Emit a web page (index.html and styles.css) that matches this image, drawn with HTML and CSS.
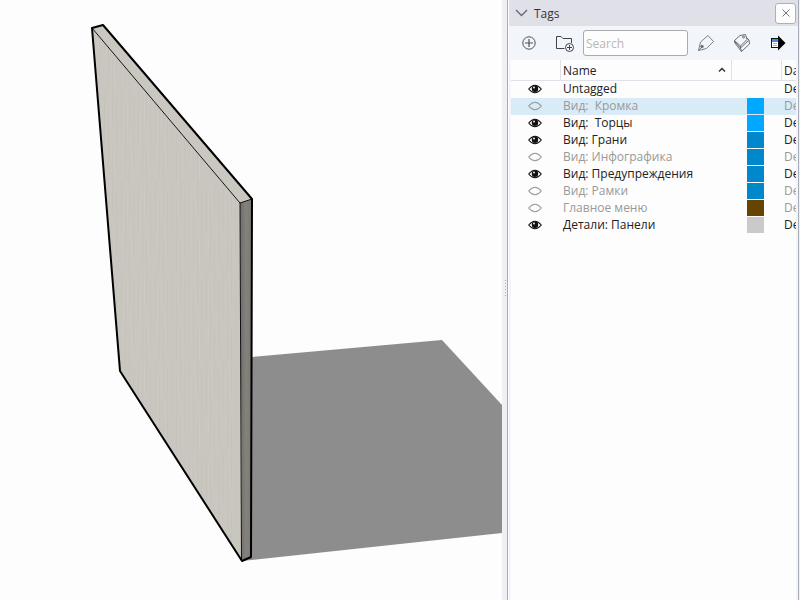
FILE: index.html
```html
<!DOCTYPE html>
<html lang="ru">
<head>
<meta charset="utf-8">
<title>Tags</title>
<link rel="stylesheet" href="styles.css">
</head>
<body>
<div class="app">
  <main class="viewport">
    <svg class="scene" width="502" height="600" viewBox="0 0 502 600" aria-hidden="true">
      <defs>
        <pattern id="grain" width="17" height="90" patternUnits="userSpaceOnUse">
          <rect width="17" height="90" fill="#c9c6bf"/>
          <path d="M2.500 0v52M6.500 20v70M10.500 0v34M10.500 60v30M14.500 10v66" stroke="#c6c3bc"/>
          <path d="M4.500 12v60M8.500 0v40M12.500 40v50" stroke="#cbc8c2"/>
        </pattern>
        <linearGradient id="edge"><stop offset="0" stop-color="#6d6d6a"/><stop offset=".5" stop-color="#84827c"/><stop offset="1" stop-color="#7a7873"/></linearGradient>
      </defs>
      <path d="M252 357L442 340L502 405V533L242 561Z" fill="#8d8d8d"/>
      <path d="M92 28L240 203L242 561L120 371Z" fill="url(#grain)"/>
      <path d="M92 28L103 25L252 199L240 203Z" fill="#cac7c1"/>
      <path d="M240 203L252 199L251 557L242 561Z" fill="url(#edge)"/>
      <path d="M92 28L240 203L241.500 560M240 203L252 199" fill="none" stroke="#111" stroke-width="1"/>
      <path d="M92 28L103 25L252 199L251 557L242 561L120 371Z" fill="none" stroke="#000" stroke-width="2" stroke-linejoin="round"/>
    </svg>
  </main>
  <div class="splitter"><span class="grip"></span></div>
  <aside class="panel">
    <header class="panel-head">
      <button class="collapse" aria-label="Collapse"><svg width="13" height="8" viewBox="0 0 13 8"><path d="M1 1l5.500 5.500L12 1" fill="none" stroke="#666670" stroke-width="1.300"/></svg></button>
      <h1 class="title">Tags</h1>
      <button class="close" aria-label="Close"><svg width="8" height="8" viewBox="0 0 8 8"><path d="M.5.5l7 7M7.500.5l-7 7" stroke="#777" fill="none"/></svg></button>
    </header>
    <div class="toolbar">
      <button class="tool" aria-label="Add tag"><svg width="20" height="20" viewBox="0 0 20 20" fill="none" stroke="#50505c"><circle cx="10" cy="10" r="6.200"/><path d="M6 10h8M10 6v8" stroke-width="1.200"/></svg></button>
      <button class="tool" aria-label="Add tag folder"><svg width="20" height="20" viewBox="0 0 20 20" fill="none" stroke="#41414f"><path d="M9.500 15.500h-8v-12H6l2 2h8.500V10"/><circle cx="14.500" cy="14.500" r="4"/><path d="M12 14.500h5M14.500 12v5"/></svg></button>
      <input class="search" type="text" placeholder="Search" aria-label="Search">
      <button class="tool" aria-label="Tag tool"><svg width="20" height="20" viewBox="0 0 20 20" fill="none" stroke="#73737d"><path d="M2.500 17.500l2-8.500 7.500-6.500 5.500 6-7 7-8 2zM2.500 17.500l4-4" stroke-width=".9"/><circle cx="6" cy="13.500" r="1.300" fill="#666"/></svg></button>
      <button class="tool" aria-label="Color by tag"><svg width="20" height="20" viewBox="0 0 20 20" fill="none" stroke="#5c5c69" stroke-width=".9"><path d="M8 2.500l5.500-1 1.500 5-6.500 6.500-6-5.500zM2.500 7.500v2l7 9 8-7.500-.5-4-2.500-2.500M3 9l5.500 6 8-7.500M8.500 13v2l1 3.500"/><circle cx="11.500" cy="4" r="1"/></svg></button>
      <button class="tool" aria-label="Details"><svg width="20" height="20" viewBox="0 0 20 20"><path d="M10 2.500l7.500 7.500-7.500 7.500z" fill="#000"/><rect x="3.500" y="5.500" width="7" height="9" fill="#fff" stroke="#111"/><path d="M4 6h6v3H4z" fill="#4389dc"/><path d="M5 10.500h4M5 12.500h4" stroke="#aaa"/></svg></button>
    </div>
    <div class="list">
      <table class="tags">
        <colgroup><col class="c-eye"><col class="c-name"><col class="c-color"><col></colgroup>
        <thead><tr><th></th><th><span class="sort">Name<svg width="8" height="6" viewBox="0 0 8 6"><path d="M1 4.500L4 1.500l3 3" fill="none" stroke="#333" stroke-width="1.500"/></svg></span></th><th></th><th>Dashes</th></tr></thead>
        <tbody>
          <tr><td><button class="eye" aria-label="Visible"><svg><use href="#open"/></svg></button></td><td>Untagged</td><td></td><td>Default</td></tr>
          <tr class="off selected"><td><button class="eye" aria-label="Hidden"><svg><use href="#shut"/></svg></button></td><td>Вид:  Кромка</td><td><button class="swatch sky" aria-label="Color"></button></td><td>Default</td></tr>
          <tr><td><button class="eye" aria-label="Visible"><svg><use href="#open"/></svg></button></td><td>Вид:  Торцы</td><td><button class="swatch sky" aria-label="Color"></button></td><td>Default</td></tr>
          <tr><td><button class="eye" aria-label="Visible"><svg><use href="#open"/></svg></button></td><td>Вид: Грани</td><td><button class="swatch blue" aria-label="Color"></button></td><td>Default</td></tr>
          <tr class="off"><td><button class="eye" aria-label="Hidden"><svg><use href="#shut"/></svg></button></td><td>Вид: Инфографика</td><td><button class="swatch blue" aria-label="Color"></button></td><td>Default</td></tr>
          <tr><td><button class="eye" aria-label="Visible"><svg><use href="#open"/></svg></button></td><td>Вид: Предупреждения</td><td><button class="swatch blue" aria-label="Color"></button></td><td>Default</td></tr>
          <tr class="off"><td><button class="eye" aria-label="Hidden"><svg><use href="#shut"/></svg></button></td><td>Вид: Рамки</td><td><button class="swatch blue" aria-label="Color"></button></td><td>Default</td></tr>
          <tr class="off"><td><button class="eye" aria-label="Hidden"><svg><use href="#shut"/></svg></button></td><td>Главное меню</td><td><button class="swatch brown" aria-label="Color"></button></td><td>Default</td></tr>
          <tr><td><button class="eye" aria-label="Visible"><svg><use href="#open"/></svg></button></td><td>Детали: Панели</td><td><button class="swatch gray" aria-label="Color"></button></td><td>Default</td></tr>
        </tbody>
      </table>
    </div>
  </aside>
  <div class="rim"></div>
</div>
<svg class="symbols" aria-hidden="true">
  <symbol id="open" viewBox="0 0 14 10"><path d="M.7 5Q7-2.500 13.300 5Q7 12.500.7 5z" fill="#fff" stroke="#111" stroke-width="1.100"/><circle cx="7" cy="4.700" r="3.200" fill="#111"/><circle cx="6" cy="3.500" r=".9" fill="#fff"/></symbol>
  <symbol id="shut" viewBox="0 0 14 10"><path d="M.7 5Q7-2.500 13.300 5Q7 12.500.7 5z" fill="none" stroke="#999" stroke-width="1.100"/></symbol>
</svg>
</body>
</html>
```
FILE: styles.css
```css
* { box-sizing: border-box; }
body {
  margin: 0;
  background: #fdfdfd;
  color: #222;
  font: 12px/17px "Open Sans", sans-serif;
}
button { padding: 0; border: 0; background: none; }
svg { display: block; }
.symbols { position: absolute; width: 0; height: 0; }
.app { display: flex; min-height: 100vh; }
.viewport { flex: 1; min-width: 0; overflow: hidden; background: #fdfdfd; }
.splitter {
  width: 6px;
  display: flex;
  align-items: center;
  justify-content: flex-end;
  padding-right: 1px;
  background: #efeff5;
  border-right: 1px solid #a9a9ae;
}
.grip {
  width: 1px;
  height: 16px;
  margin-bottom: 24px;
  background: repeating-linear-gradient(#b0b0b4 0 1px, transparent 1px 3px);
}
.panel {
  width: 290px;
  display: flex;
  flex-direction: column;
  background: #f2f6fb;
  border-left: 1px solid #fff;
}
.rim { width: 2px; background: #f0f0f4; border-left: 1px solid #a9adb8; }
.panel-head {
  height: 26px;
  display: flex;
  align-items: center;
  gap: 6px;
  padding: 0 2px 0 6px;
  background: #e0e0e9;
}
.title { flex: 1; margin: 0; font-size: 12px; font-weight: 400; color: #333; }
.close {
  width: 21px;
  height: 21px;
  display: grid;
  place-items: center;
  background: #fdfdfd;
  border: 1px solid #b0b0b4;
  border-radius: 3px;
}
.toolbar {
  height: 34px;
  display: flex;
  align-items: center;
  gap: 16px;
  padding: 0 10px;
}
.search {
  flex: 1;
  min-width: 0;
  height: 26px;
  margin: 0 -8px;
  padding: 0 2px;
  border: 1px solid #a9a9ae;
  border-radius: 3px;
  background: #fdfdfd;
  font: inherit;
}
.search::placeholder { color: #b8b8b8; opacity: 1; }
.list { flex: 1; margin: 0 2px; overflow: hidden; background: #fdfdfd; }
.tags { width: 100%; table-layout: fixed; border-collapse: separate; border-spacing: 0; }
.c-eye, .c-color { width: 50px; }
.c-name { width: 171px; }
th, td {
  height: 17px;
  padding: 0 0 0 2px;
  overflow: hidden;
  white-space: pre;
  text-align: left;
  font-weight: 400;
  text-overflow: clip;
}
td { vertical-align: top; line-height: 16px; }
td:first-child { padding: 3px 2px 0 0; }
th { height: 21px; border-bottom: 1px solid #e0e0e9; border-right: 1px solid #e0e0e9; }
th:last-child { border-right: 0; }
.sort { display: flex; align-items: center; justify-content: space-between; padding-right: 5px; }
.off { color: #999; }
.selected { background: #d9ebf7; }
.eye { display: block; margin: 0 auto; }
.eye svg { width: 14px; height: 10px; }
.swatch { display: block; width: 17px; height: 16px; margin: 0 0 1px 13px; }
.sky { background: #00a8ff; }
.blue { background: #0088cc; }
.brown { background: #664400; }
.gray { background: #cacaca; }
```
